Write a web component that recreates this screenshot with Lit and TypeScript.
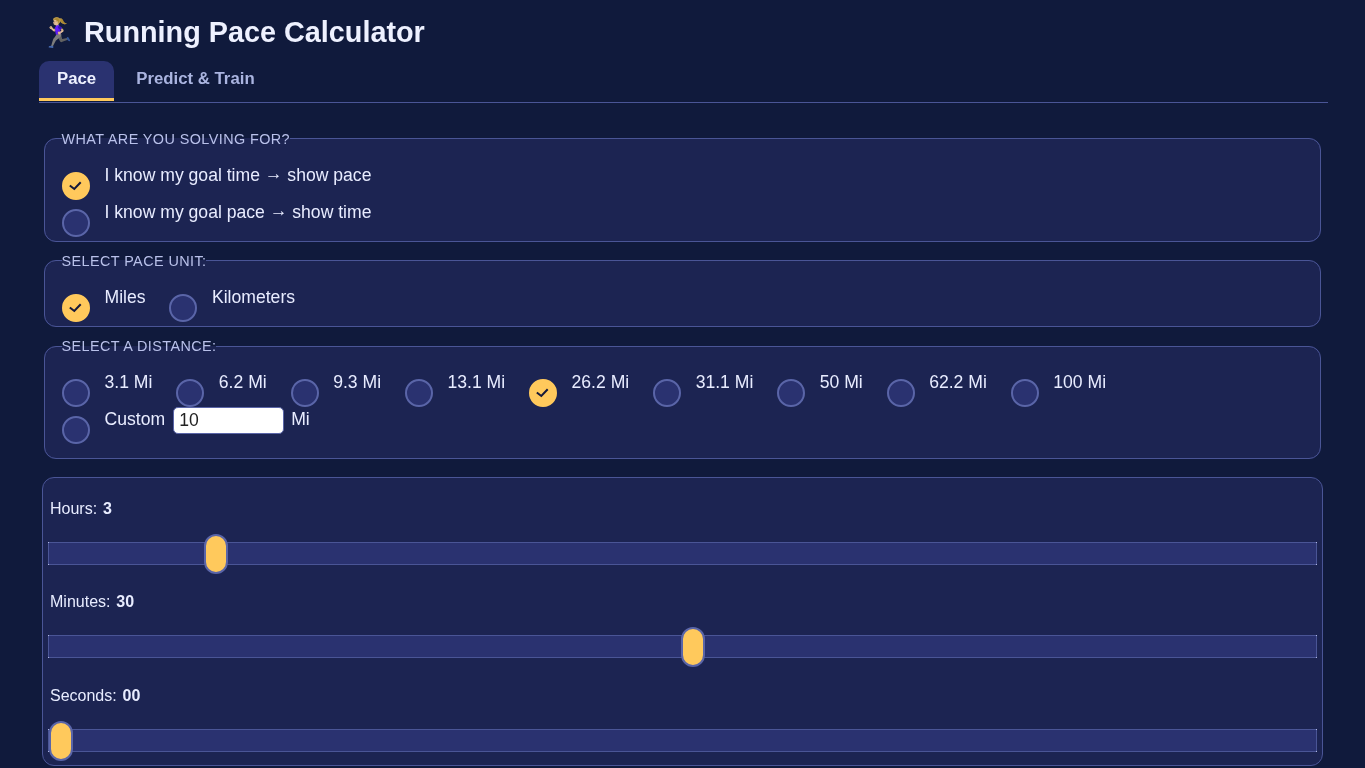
import { LitElement, html, css } from "lit";
import { customElement, property } from "lit/decorators.js";

const check = html`<svg class="check" viewBox="0 0 16 16" aria-hidden="true"><path d="M1.8 7.5 L6.3 11 L12.7 4.3" fill="none" stroke="#15193a" stroke-width="2"/></svg>`;

@customElement("app-radio")
class AppRadio extends LitElement {
  @property({ type: Boolean }) checked = false;
  static styles = css`
    :host { display: inline-flex; align-items: flex-start; color: #e8ecff; font-size: 17.6px; line-height: 20px; }
    .dot { box-sizing: border-box; width: 28px; height: 28px; border-radius: 50%; margin-top: 5px; margin-right: 14.5px; border: 2px solid #5a65a8; background: #2a3270; display: flex; align-items: center; justify-content: center; flex: none; }
    .dot.on { background: #ffc95c; border-color: #ffc95c; }
    .check { width: 16px; height: 16px; }
    .label { display: inline-flex; align-items: center; gap: 8px; margin-top: -2px; min-height: 20px; }
  `;
  render() {
    return html`<span class="dot ${this.checked ? "on" : ""}">${this.checked ? check : ""}</span><span class="label"><slot></slot></span>`;
  }
}

@customElement("app-root")
export class AppRoot extends LitElement {
  static styles = css`
    :host { display: block; box-sizing: border-box; height: 768px; overflow: hidden; background: #101a3c; font-family: "Liberation Sans", Arial, sans-serif; color: #e8ecff; padding: 0 37px 0 39px; }
    h1 { will-change: transform; margin: 0; height: 61px; display: flex; align-items: center; gap: 8px; padding: 4px 0 0 1px; box-sizing: border-box; font-size: 28.8px; font-weight: 700; color: #eef1ff; }
    .tabs { will-change: transform; display: flex; gap: 4px; border-bottom: 1px solid #4a5596; height: 42px; box-sizing: border-box; }
    .tab { box-sizing: content-box; padding: 0 18px; height: 37px; line-height: 35px; font-size: 16.8px; font-weight: 700; color: #aab4e0; border-radius: 10px 10px 0 0; border-bottom: 3px solid transparent; }
    .tab.active { background: #2a3270; color: #eef1ff; border-bottom-color: #ffc95c; }
    .body { will-change: transform; padding: 25px 7px 0 5px; display: flex; flex-direction: column; }
    fieldset { margin: 0 0 8px; padding: 0 17px; border: 1px solid #4a5596; border-radius: 12px; background: #1c2452; min-width: 0; }
    legend { padding: 3px 0 1px; margin-left: -0.5px; font-size: 14.4px; letter-spacing: 0.42px; color: #b9c1ea; text-transform: uppercase; line-height: 16px; }
    .rows { display: flex; flex-direction: column; padding: 19px 0 0; }
    .row { display: flex; flex-wrap: wrap; gap: 9px 23.9px; }
    .wide { height: 37px; }
    .tall { height: 47px; }
    .dist { margin-top: 1px; }
    .dist legend { padding: 2px 0; }
    .dist .rows { padding-top: 18px; }
    .arrow { vertical-align: 2px; line-height: 0; }
    input[type="number"] { box-sizing: border-box; width: 111px; height: 27px; margin: -2.5px -1px -4.5px 0; border: 1px solid #5a65a8; border-radius: 5px; background: #fff; color: #222; font: 17.6px "Liberation Sans", Arial, sans-serif; padding: 0 5px; line-height: 25px; }
    .sliders { margin: 10px -2px 0; height: 289px; flex: none; box-sizing: border-box; border: 1px solid #4a5596; border-radius: 12px; background: #1c2452; padding: 20.8px 5px 13px; display: flex; flex-direction: column; gap: 27.5px; }
    .cap { display: flex; gap: 5.8px; align-items: center; height: 20px; padding-left: 2px; font-size: 16px; }
    .cap b { font-weight: 700; }
    input[type="range"] {
      -webkit-appearance: none; appearance: none; display: block; box-sizing: border-box; width: 1269px; height: 23px; margin: 23px 0 0; padding: 0 1px; border: 0; border-radius: 0;
      background:
        linear-gradient(#aeb5e0, #aeb5e0) left top / 1px 1px no-repeat,
        linear-gradient(#aeb5e0, #aeb5e0) right top / 1px 1px no-repeat,
        linear-gradient(#aeb5e0, #aeb5e0) left bottom / 1px 1px no-repeat,
        linear-gradient(#aeb5e0, #aeb5e0) right bottom / 1px 1px no-repeat,
        linear-gradient(#4a5596, #4a5596) top / 100% 1px no-repeat,
        linear-gradient(#4a5596, #4a5596) bottom / 100% 1px no-repeat,
        linear-gradient(#4a5596, #4a5596) left / 1px 100% no-repeat,
        linear-gradient(#4a5596, #4a5596) right / 1px 100% no-repeat,
        #2a3270;
    }
    input[type="range"]::-webkit-slider-runnable-track { height: 23px; }
    input[type="range"]::-webkit-slider-thumb { -webkit-appearance: none; box-sizing: border-box; width: 24px; height: 40px; margin-top: -8px; border-radius: 12px; background: #ffc95c; border: 2px solid #5a65a8; }
  `;
  render() {
    const dists = ["3.1 Mi", "6.2 Mi", "9.3 Mi", "13.1 Mi", "26.2 Mi", "31.1 Mi", "50 Mi", "62.2 Mi", "100 Mi"];
    const arrow = html`<span class="arrow">→</span>`;
    return html`
      <h1><span>🏃🏼‍♀️</span><span>Running Pace Calculator</span></h1>
      <div class="tabs"><div class="tab active">Pace</div><div class="tab">Predict &amp; Train</div></div>
      <div class="body">
        <fieldset>
          <legend>What are you solving for?</legend>
          <div class="rows">
            <div class="wide"><app-radio checked><span>I know my goal time ${arrow} show pace</span></app-radio></div>
            <div class="wide"><app-radio><span>I know my goal pace ${arrow} show time</span></app-radio></div>
          </div>
        </fieldset>
        <fieldset>
          <legend>Select pace unit:</legend>
          <div class="rows"><div class="row wide"><app-radio checked>Miles</app-radio><app-radio>Kilometers</app-radio></div></div>
        </fieldset>
        <fieldset class="dist">
          <legend>Select a distance:</legend>
          <div class="rows">
            <div class="row wide">${dists.map((d) => html`<app-radio ?checked=${d === "26.2 Mi"}>${d}</app-radio>`)}</div>
            <div class="tall"><app-radio>Custom <input type="number" value="10" /> Mi</app-radio></div>
          </div>
        </fieldset>
        <div class="sliders">
          ${[["Hours:", "3", 0, 24, 3], ["Minutes:", "30", 0, 59, 30], ["Seconds:", "00", 0, 59, 0]].map(
            ([l, v, min, max, val]) => html`<div class="slider"><div class="cap"><span>${l}</span><b>${v}</b></div><input type="range" min=${min} max=${max} .value=${String(val)} /></div>`
          )}
        </div>
      </div>
    `;
  }
}
